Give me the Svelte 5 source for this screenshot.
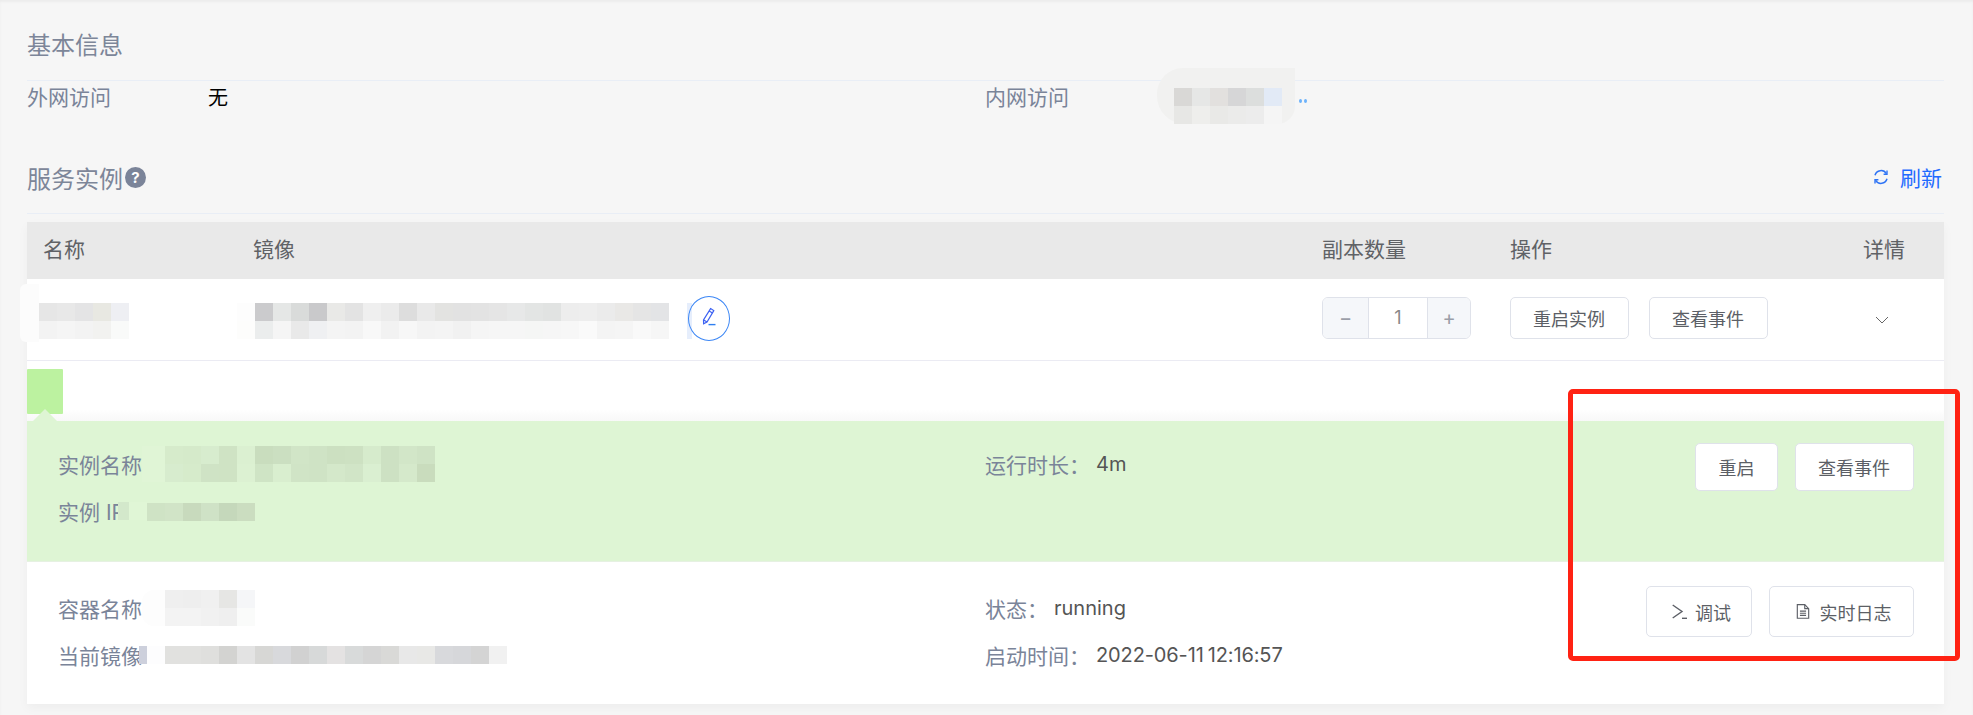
<script>
  const nameMosaic = [
    ['e6e6e6', 'e8e8e8', 'e4e4e5', 'e8e8e2', 'eeeff3'],
    ['f3f3f3', 'f5f5f5', 'f3f3f3', 'f2f2f0', 'f9faf9']
  ];
  const imageMosaic = [
    ['fdfdfd', 'cbcbcd', 'e5e7e6', 'd9dbda', 'c9c9cb', 'e9e9e7', 'e3e3e3', 'efefef', 'ebebeb', 'dddddd', 'e9e9e9', 'e3e3e1', 'e2e2e2', 'e3e3e3', 'e5e5e5', 'e7e8e8', 'e3e5e4', 'e1e3e2', 'ededed', 'eeeeee', 'ebebeb', 'e9e8e6', 'e5e5e5', 'e3e4e6'],
    ['fdfdfc', 'ebeded', 'f5f5f5', 'e9e9e9', 'eff0f2', 'f4f4f4', 'f3f3f3', 'f8f8f8', 'f2f2f2', 'f7f7f7', 'f3f3f3', 'f4f4f4', 'f1f1f1', 'f5f5f5', 'f6f6f6', 'f6f6f6', 'f5f6f5', 'f6f6f6', 'f7f7f7', 'fafafa', 'f4f4f4', 'f5f5f5', 'f9f9f9', 'f6f6f6']
  ];
  const innerMosaic = [
    ['d9d8d6', 'e6e7e6', 'e2e0de', 'd6d6d7', 'dcdedd', 'e2eaf6'],
    ['e7e7e5', 'eeeeec', 'e9e9e7', 'ebebea', 'ececec', 'f5f5f5']
  ];
  const instanceMosaic = [
    ['d6ebcb', 'd5eaca', 'd7ecce', 'cfe3c4', 'dbf0d1', 'c9ddbe', 'cbdfc1', 'd1e5c7', 'cfe3c5', 'cce0c1', 'cde1c2', 'd6ebcc', 'cde1c3', 'd2e6c8', 'cfe3c5'],
    ['d7ecce', 'd6ebcb', 'cfe3c5', 'cfe3c4', 'dcf1d2', 'cfe4c5', 'd9eecf', 'd0e4c6', 'cfe3c5', 'd4e8ca', 'd1e5c7', 'daefd1', 'cde1c3', 'd5e9cb', 'c9dcbd']
  ];
  const ipMosaic = [['cfe3c5', 'd1e4c7', 'c8dabd', 'cfe2c6', 'c5d8bb', 'cbddc0']];
  const containerMosaic = [
    ['efefef', 'eeeeee', 'f0f0f0', 'e6e6e4', 'f5f6f8'],
    ['f3f3f3', 'f3f3f3', 'f1f1f1', 'efefef', 'fafbfa']
  ];
  const currentMosaic = [['e1e1df', 'e1e1df', 'dfdfdd', 'd3d3d1', 'e3e3e3', 'd7d7d5', 'd8d9dc', 'd1d1d1', 'd7d9d9', 'e4e2e2', 'd8dada', 'd5d5d5', 'd9d9d7', 'e8e8e8', 'e8e8e6', 'd8d9dc', 'd6d7da', 'd4d4d4', 'f1f1f1']];
</script>

{#snippet mosaic(rows)}
  <div class="mosaic">
    {#each rows as row}
      <div class="mosaic-row">
        {#each row as c}
          <span class="cell" style="background:#{c}"></span>
        {/each}
      </div>
    {/each}
  </div>
{/snippet}

<div class="page">
  <section class="head basic">
    <h2>基本信息</h2>
  </section>
  <div class="info">
    <span class="label">外网访问</span>
    <span class="none">无</span>
    <span class="label">内网访问</span>
    <div class="inner-addr">
      <span class="inner-blob"></span>
      <div class="inner-mosaic">{@render mosaic(innerMosaic)}</div>
      <span class="dots"></span>
    </div>
  </div>

  <section class="head instances">
    <h2>服务实例</h2>
    <span class="help">?</span>
    <a class="refresh" href="#refresh">
      <svg viewBox="0 0 18 18" width="18" height="18" fill="none" stroke="currentColor" stroke-width="1.5">
        <path d="M3 7.2A6.3 6.3 0 0 1 14.4 5.6" />
        <path d="M15 10.8A6.3 6.3 0 0 1 3.6 12.4" />
        <path d="M15 2.6v3.6h-3.4" stroke-width="1.4" />
        <path d="M3 15.4v-3.6h3.4" stroke-width="1.4" />
      </svg>
      <span>刷新</span>
    </a>
  </section>

  <div class="table">
    <div class="grid thead">
      <span>名称</span>
      <span>镜像</span>
      <span>副本数量</span>
      <span>操作</span>
      <span>详情</span>
    </div>
    <div class="grid tbody">
      <div class="name-cell">
        <span class="name-blob"></span>
        {@render mosaic(nameMosaic)}
      </div>
      <div class="image-cell">
        {@render mosaic(imageMosaic)}
        <span class="edit-band"></span>
        <button class="edit" aria-label="编辑">
          <svg viewBox="0 0 22 22" width="22" height="22" fill="none" stroke="#3d62f2" stroke-width="1.2">
            <path d="M12.6 1.6l3.2 2-6.8 11.4-3.4 1.8-.1-3.8z" />
            <path d="M11.2 4l3.2 2" />
            <path d="M5.8 13l3.2 2" />
            <path d="M10.5 17.6h7" stroke="#2f7ff0" stroke-width="1.4" />
          </svg>
        </button>
      </div>
      <div class="counter">
        <span class="step">−</span>
        <span class="value">1</span>
        <span class="step">+</span>
      </div>
      <div class="ops">
        <button class="btn">重启实例</button>
        <button class="btn">查看事件</button>
      </div>
      <div class="chevron">
        <svg viewBox="0 0 14 8" width="14" height="8" fill="none" stroke="#666" stroke-width="1">
          <path d="M1 1l6 6 6-6" />
        </svg>
      </div>
    </div>

    <div class="detail">
      <div class="chip-zone"><span class="chip"></span><span class="tip"></span></div>
      <div class="pod">
        <div class="col">
          <div class="line">
            <span class="label">实例名称</span>
            <span class="pod-blob"></span>
            {@render mosaic(instanceMosaic)}
          </div>
          <div class="line ip">
            <span class="label">实例 IP</span>
            <span class="ip-mark"></span>
            <span class="ip-gap"></span>
            {@render mosaic(ipMosaic)}
          </div>
        </div>
        <div class="col">
          <div class="line"><span class="label">运行时长：</span><span class="val">4m</span></div>
        </div>
        <div class="actions pod-actions">
          <button class="btn tall">重启</button>
          <button class="btn tall">查看事件</button>
        </div>
      </div>
      <div class="container">
        <div class="col">
          <div class="line">
            <span class="label">容器名称</span>
            <span class="white-gap"></span>
            {@render mosaic(containerMosaic)}
          </div>
          <div class="line">
            <span class="label">当前镜像</span>
            <span class="cur-mark"></span>
            <span class="cur-gap"></span>
            {@render mosaic(currentMosaic)}
          </div>
        </div>
        <div class="col">
          <div class="line"><span class="label">状态：</span><span class="val">running</span></div>
          <div class="line"><span class="label">启动时间：</span><span class="val date">2022-06-11 12:16:57</span></div>
        </div>
        <div class="actions container-actions">
          <button class="btn taller debug">
            <svg viewBox="0 0 15 15" width="15" height="15" fill="none" stroke="#5c5f66" stroke-width="1.4">
              <path d="M0.7 1l9.3 6.5-9.3 6.5" />
              <path d="M10 14.3h5" />
            </svg>
            调试
          </button>
          <button class="btn taller logs">
            <svg viewBox="0 0 16 18" width="14" height="17" fill="none" stroke="#5c5f66" stroke-width="1.3">
              <path d="M1.5 1.2h8.5l4.5 4.5v11H1.500z" />
              <path d="M10 1.2v4.500h4.500" />
              <path d="M4.500 8.500h7M4.500 11h7M4.500 13.500h7" />
            </svg>
            实时日志
          </button>
        </div>
      </div>
    </div>
  </div>

  <div class="mark"></div>
</div>

<style>
  :global(body) {
    margin: 0;
    background: #f6f6f6;
  }
  .page {
    position: relative;
    height: 715px;
    overflow: hidden;
    box-sizing: border-box;
    padding: 0 29px 0 27px;
    background: #f6f6f6;
    box-shadow: inset 0 2px 2px #ececec;
    font-family: Inter, "Noto Sans CJK SC", sans-serif;
    font-size: 21px;
    color: #606266;
  }
  h2 {
    margin: 0;
    font-size: 24px;
    font-weight: 400;
    color: #7d8699;
  }
  .head {
    display: flex;
    align-items: center;
    border-bottom: 1px solid #e9eef6;
    box-sizing: border-box;
  }
  .basic {
    height: 81px;
    padding-top: 6px;
  }
  .info {
    display: grid;
    grid-template-columns: 181px 777px 172px 1fr;
    align-items: start;
    height: 36px;
    line-height: 33px;
  }
  .label {
    color: #7a8499;
    white-space: nowrap;
  }
  .none {
    color: #000;
    font-size: 20px;
    line-height: 35px;
  }
  .inner-addr {
    position: relative;
    display: flex;
    height: 36px;
  }
  .inner-mosaic {
    position: relative;
    margin-left: 17px;
    margin-top: 7px;
  }
  .inner-blob {
    position: absolute;
    left: 0;
    top: -13px;
    width: 138px;
    height: 56px;
    border-radius: 26px 0 18px 28px;
    background: #f1f1f0;
  }
  .dots {
    position: absolute;
    left: 142px;
    top: 18px;
    width: 3px;
    height: 4px;
    border-radius: 50%;
    background: #6cb2fb;
    box-shadow: 5px 0 0 #6cb2fb;
  }
  .instances {
    position: relative;
    height: 97px;
    padding-top: 24px;
  }
  .help {
    display: flex;
    align-items: center;
    justify-content: center;
    width: 21px;
    height: 21px;
    margin-left: 2px;
    border-radius: 50%;
    background: #7b8499;
    color: #fff;
    font-size: 15px;
    font-weight: 700;
    line-height: 1;
  }
  .refresh {
    display: flex;
    align-items: center;
    gap: 10px;
    margin-left: auto;
    margin-right: 2px;
    color: #1f6bff;
    text-decoration: none;
  }
  .refresh svg {
    color: #2f74f5;
  }
  .table {
    margin-top: 8px;
    background: #fff;
    box-shadow: 0 4px 10px rgba(0, 0, 0, 0.04);
  }
  .grid {
    display: grid;
    grid-template-columns: 210px 1069px 188px 353px 81px;
    align-items: center;
    padding-left: 16px;
  }
  .thead {
    height: 57px;
    background: #e9e9e9;
    padding-bottom: 6px;
    box-sizing: border-box;
  }
  .tbody {
    height: 82px;
    border-bottom: 1px solid #ebebf3;
    box-sizing: border-box;
  }
  .mosaic {
    position: relative;
    display: flex;
    flex-direction: column;
  }
  .mosaic-row {
    display: flex;
  }
  .cell {
    width: 18px;
    height: 18px;
  }
  .name-cell {
    position: relative;
    margin-left: -4px;
    margin-top: 3px;
  }
  .name-blob {
    position: absolute;
    left: -19px;
    top: -19px;
    width: 19px;
    height: 58px;
    border-radius: 6px 0 0 6px;
    background: #fcfcfc;
  }
  .image-cell {
    position: relative;
    display: flex;
    align-items: center;
    margin-left: -16px;
    margin-top: 3px;
  }
  .edit-band {
    width: 5px;
    height: 36px;
    margin-left: 18px;
    background: #e6eefc;
  }
  .edit {
    box-sizing: border-box;
    display: flex;
    align-items: center;
    justify-content: center;
    width: 42px;
    height: 45px;
    margin-left: -4px;
    margin-top: -6px;
    padding: 0;
    border: 1.5px solid #3b86f5;
    border-radius: 50%;
    background: transparent;
  }
  .counter {
    box-sizing: border-box;
    display: grid;
    grid-template-columns: 45px 60px 1fr;
    width: 149px;
    height: 42px;
    margin-top: -3px;
    border: 1px solid #dfe2ea;
    border-radius: 6px;
    overflow: hidden;
    line-height: 40px;
    text-align: center;
    font-size: 18px;
  }
  .step {
    background: #f5f7fa;
    color: #9a9ea8;
    font-size: 20px;
  }
  .value {
    border-left: 1px solid #dfe2ea;
    border-right: 1px solid #dfe2ea;
    color: #888;
  }
  .ops {
    display: flex;
    gap: 20px;
    margin-top: -3px;
    margin-left: -0.5px;
  }
  .btn {
    box-sizing: border-box;
    display: inline-flex;
    align-items: center;
    justify-content: center;
    height: 42px;
    padding: 0 22.5px;
    border: 1px solid #dfe2ea;
    border-radius: 5px;
    background: #fff;
    color: #5c5f66;
    font-family: inherit;
    font-size: 18px;
    white-space: nowrap;
  }
  .chevron {
    display: flex;
    margin-left: 12px;
  }
  .chip-zone {
    position: relative;
    height: 60px;
    background: linear-gradient(#fff 48px, #f8f8f8 60px);
  }
  .chip {
    position: absolute;
    left: 0;
    top: 8px;
    width: 36px;
    height: 45px;
    border-radius: 1px;
    background: #bcf2a0;
  }
  .tip {
    position: absolute;
    left: 6px;
    bottom: 0;
    border-left: 12px solid transparent;
    border-right: 12px solid transparent;
    border-bottom: 12px solid #def5d4;
  }
  .pod,
  .container {
    display: grid;
    grid-template-columns: 927px 1fr auto;
    padding-left: 31px;
    padding-right: 30.5px;
    box-sizing: border-box;
  }
  .pod {
    height: 141px;
    padding-top: 25px;
    background: #def5d4;
    border-bottom: 1px solid #e6f1e2;
  }
  .container {
    height: 142px;
    padding-top: 28px;
    background: #fff;
  }
  .col {
    display: flex;
    flex-direction: column;
    gap: 11px;
  }
  .line {
    position: relative;
    display: flex;
    align-items: center;
    height: 36px;
  }
  .pod-blob {
    width: 23px;
    height: 36px;
    background: #e0f5d6;
  }
  .ip .mosaic {
    margin-top: 1px;
  }
  .ip-mark {
    position: relative;
    width: 11px;
    height: 18px;
    margin-left: -7px;
    background: #d3e8cb;
  }
  .ip-gap {
    width: 18px;
    height: 18px;
    background: #e0f6d6;
  }
  .white-gap {
    width: 23px;
    height: 36px;
    border-radius: 12px 0 0 12px;
    background: #fdfdfd;
  }
  .cur-mark {
    position: relative;
    width: 8px;
    height: 18px;
    margin-left: -3px;
    background: #cdd0dc;
  }
  .cur-gap {
    width: 18px;
    height: 18px;
    background: #fdfdfe;
  }
  .val {
    margin-left: 6px;
    color: #555;
    font-size: 20px;
    white-space: nowrap;
  }
  .date {
    word-spacing: -1.5px;
    letter-spacing: -0.12px;
  }
  .actions {
    display: flex;
    gap: 16.5px;
  }
  .pod-actions {
    margin-top: -3px;
  }
  .tall {
    height: 48px;
  }
  .container-actions {
    margin-top: -4px;
  }
  .taller {
    height: 51px;
  }
  .debug {
    gap: 8px;
    padding: 0 20px 0 25px;
  }
  .logs {
    gap: 10px;
    padding: 0 21px 0 26px;
  }
  .mark {
    position: absolute;
    left: 1568px;
    top: 389px;
    width: 392px;
    height: 272px;
    box-sizing: border-box;
    border: 5px solid #ff2213;
    border-radius: 5px;
  }
</style>
